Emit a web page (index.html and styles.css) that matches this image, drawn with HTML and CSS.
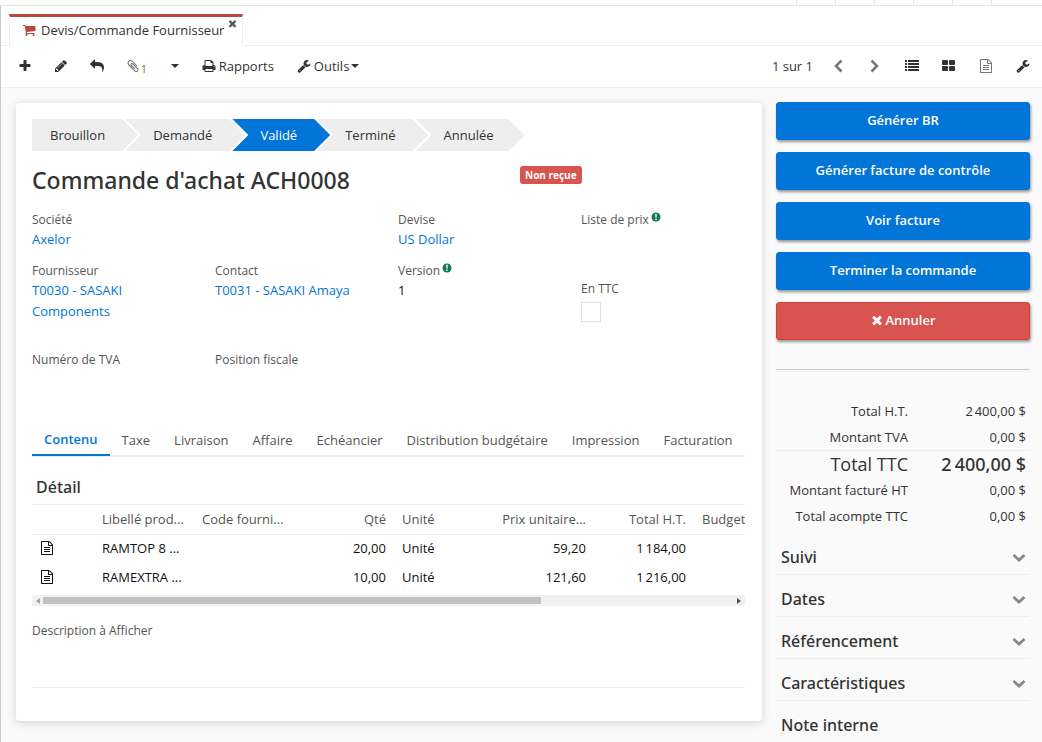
FILE: index.html
```html
<!DOCTYPE html>
<html lang="fr">
<head>
<meta charset="utf-8">
<title>Devis/Commande Fournisseur</title>
<link rel="stylesheet" href="styles.css">
</head>
<body>
<svg class="sprite" aria-hidden="true">
  <symbol id="plus" viewBox="0 0 1792 1792"><path d="M1600 736v192q0 40-28 68t-68 28h-416v416q0 40-28 68t-68 28h-192q-40 0-68-28t-28-68v-416h-416q-40 0-68-28t-28-68v-192q0-40 28-68t68-28h416v-416q0-40 28-68t68-28h192q40 0 68 28t28 68v416h416q40 0 68 28t28 68z"/></symbol>
  <symbol id="pencil" viewBox="0 0 1792 1792"><path d="M491 1536l91-91-235-235-91 91v107h128v128h107zm523-928q0-22-22-22-10 0-17 7l-542 542q-7 7-7 17 0 22 22 22 10 0 17-7l542-542q7-7 7-17zm-54-192l416 416-832 832h-416v-416zm683 96q0 53-37 90l-166 166-416-416 166-165q36-38 90-38 53 0 91 38l235 234q37 39 37 91z"/></symbol>
  <symbol id="reply" viewBox="0 0 1792 1792"><path d="M1792 640q0 26-19 45l-512 512q-19 19-45 19t-45-19-19-45v-256h-224q-98 0-175.500 6t-154 21.500-133 42.500-105.500 69.500-80 101-48.500 138.500-17.500 181q0 55 5 123 0 6 2.500 23.500t2.500 26.500q0 15-8.500 25t-23.500 10q-16 0-28-17-7-9-13-22t-13.500-30-10.500-24q-127-285-127-451 0-199 53-333 162-403 875-403h224v-256q0-26 19-45t45-19 45 19l512 512q19 19 19 45z" transform="matrix(-1 0 0 1 1792 0)"/></symbol>
  <symbol id="cart" viewBox="0 0 1792 1792"><path d="M704 1536q0 52-38 90t-90 38-90-38-38-90 38-90 90-38 90 38 38 90zm896 0q0 52-38 90t-90 38-90-38-38-90 38-90 90-38 90 38 38 90zm128-1088v512q0 24-16.500 42.500t-40.500 21.500l-1044 122q13 60 13 70 0 16-24 64h920q26 0 45 19t19 45-19 45-45 19h-1024q-26 0-45-19t-19-45q0-11 8-31.500t16-36 21.500-40 15.500-29.500l-177-823h-204q-26 0-45-19t-19-45 19-45 45-19h256q16 0 28.500 6.500t19.500 15.500 13 24.500 8 26 5.500 29.500 4.500 26h1201q26 0 45 19t19 45z"/></symbol>
  <symbol id="wrench" viewBox="0 0 1792 1792"><path d="M448 1472q0-26-19-45t-45-19-45 19-19 45 19 45 45 19 45-19 19-45zm644-420l-682 682q-37 37-90 37-52 0-91-37l-106-108q-38-36-38-90 0-53 38-91l681-681q39 98 114.500 173.500t173.500 114.500zm634-435q0 39-23 106-47 134-164.500 217.500t-258.500 83.500q-185 0-316.500-131.500t-131.500-316.500 131.500-316.500 316.500-131.500q58 0 121.500 16.500t107.500 46.500q16 11 16 28t-16 28l-293 169v224l193 107q5-3 79-48.500t135.500-81 70.500-35.500q15 0 23.500 10t8.500 25z"/></symbol>
  <symbol id="times" viewBox="0 0 1792 1792"><path d="M1490 1322q0 40-28 68l-136 136q-28 28-68 28t-68-28l-294-294-294 294q-28 28-68 28t-68-28l-136-136q-28-28-28-68t28-68l294-294-294-294q-28-28-28-68t28-68l136-136q28-28 68-28t68 28l294 294 294-294q28-28 68-28t68 28l136 136q28 28 28 68t-28 68l-294 294 294 294q28 28 28 68z"/></symbol>
  <symbol id="print" viewBox="0 0 1792 1792"><path d="M448 1536h896v-256h-896v256zm0-640h896v-384h-160q-40 0-68-28t-28-68v-160h-640v640zm1152 64q0-26-19-45t-45-19-45 19-19 45 19 45 45 19 45-19 19-45zm128 0v416q0 13-9.500 22.500t-22.500 9.500h-224v160q0 40-28 68t-68 28h-960q-40 0-68-28t-28-68v-160h-224q-13 0-22.500-9.500t-9.500-22.500v-416q0-79 56.500-135.500t135.500-56.500h64v-544q0-40 28-68t68-28h672q40 0 88 20t76 48l152 152q28 28 48 76t20 88v256h64q79 0 135.500 56.500t56.500 135.500z"/></symbol>
  <symbol id="clip" viewBox="0 0 1792 1792"><path d="M1596 1385q0 117-79 196t-196 79q-135 0-235-100l-777-776q-113-115-113-271 0-159 110-270t269-111q158 0 273 113l605 606q10 10 10 22 0 16-30.500 46.500t-46.500 30.500q-13 0-23-10l-606-607q-79-77-181-77-106 0-179 75t-73 181q0 105 76 181l776 777q63 63 145 63 64 0 106-42t42-106q0-82-63-145l-581-581q-26-24-60-24-29 0-48 19t-19 48q0 32 25 59l410 410q10 10 10 22 0 16-31 47t-47 31q-12 0-22-10l-410-410q-63-61-63-149 0-82 57-139t139-57q88 0 149 63l581 581q100 98 100 235z"/></symbol>
  <symbol id="file" viewBox="0 0 1792 1792"><path d="M1596 380q28 28 48 76t20 88v1152q0 40-28 68t-68 28h-1344q-40 0-68-28t-28-68v-1600q0-40 28-68t68-28h896q40 0 88 20t76 48zm-444-244v376h376q-10-29-22-41l-313-313q-12-12-41-22zm384 1528v-1024h-416q-40 0-68-28t-28-68v-416h-768v1536h1280zm-1024-896h768v128h-768zm0 256h768v128h-768zm0 256h768v128h-768z"/></symbol>
  <symbol id="list" viewBox="0 0 14 14"><path d="M0 1h2v2H0zM3 1h11v2H3zM0 4h2v2H0zM3 4h11v2H3zM0 7h2v2H0zM3 7h11v2H3zM0 10h2v2H0zM3 10h11v2H3z"/></symbol>
  <symbol id="cards" viewBox="0 0 14 14"><rect x="0" y="1" width="6" height="5" rx="1"/><rect x="7" y="1" width="6" height="5" rx="1"/><rect x="0" y="7" width="6" height="5" rx="1"/><rect x="7" y="7" width="6" height="5" rx="1"/></symbol>
  <symbol id="left" viewBox="0 0 14 14"><path d="M10.500 1.500L5 7l5.500 5.500" fill="none" stroke="currentColor" stroke-width="2.600"/></symbol>
  <symbol id="right" viewBox="0 0 14 14"><path d="M3.500 1.500L9 7l-5.500 5.500" fill="none" stroke="currentColor" stroke-width="2.600"/></symbol>
  <symbol id="down" viewBox="0 0 14 14"><path d="M1.500 5L7 10l5.500-5" fill="none" stroke="currentColor" stroke-width="2.800"/></symbol>
  <symbol id="caret" viewBox="0 0 8 4"><path d="M0 0h8L4 4z"/></symbol>
  <symbol id="info" viewBox="0 0 10 10"><circle cx="5" cy="5" r="4.500"/><path d="M4.200 1.800h1.600l-.3 3.900h-1zM4.300 6.600h1.400V8H4.300z" fill="#fff"/></symbol>
</svg>

<div class="topbar"><i></i><i></i><i></i><i></i><i></i><i></i></div>
<div class="app">
  <nav class="tabstrip">
    <div class="view-tab">
      <svg class="icon cart"><use href="#cart"/></svg>
      <a href="#">Devis/Commande Fournisseur</a>
      <button class="plain close" aria-label="Fermer"><svg class="icon"><use href="#times"/></svg></button>
    </div>
  </nav>

  <div class="toolbar">
    <div class="tools">
      <button class="plain" aria-label="Nouveau"><svg class="icon"><use href="#plus"/></svg></button>
      <button class="plain" aria-label="Modifier"><svg class="icon"><use href="#pencil"/></svg></button>
      <button class="plain" aria-label="Retour"><svg class="icon"><use href="#reply"/></svg></button>
      <button class="plain attach" aria-label="Pièces jointes"><svg class="icon"><use href="#clip"/></svg><sub>1</sub></button>
      <button class="plain" aria-label="Plus"><svg class="caret"><use href="#caret"/></svg></button>
      <button class="plain labelled"><svg class="icon"><use href="#print"/></svg>Rapports</button>
      <button class="plain labelled"><svg class="icon"><use href="#wrench"/></svg>Outils<svg class="caret"><use href="#caret"/></svg></button>
    </div>
    <div class="pager">
      <span class="count">1 sur 1</span>
      <button class="plain muted" aria-label="Précédent"><svg class="icon"><use href="#left"/></svg></button>
      <button class="plain muted" aria-label="Suivant"><svg class="icon"><use href="#right"/></svg></button>
      <button class="plain" aria-label="Liste"><svg class="icon"><use href="#list"/></svg></button>
      <button class="plain" aria-label="Cartes"><svg class="icon"><use href="#cards"/></svg></button>
      <button class="plain muted" aria-label="Formulaire"><svg class="icon"><use href="#file"/></svg></button>
      <button class="plain" aria-label="Options"><svg class="icon"><use href="#wrench"/></svg></button>
    </div>
  </div>

  <div class="content">
    <main class="card">
      <ol class="steps">
        <li>Brouillon</li><li>Demandé</li><li class="current">Validé</li><li>Terminé</li><li>Annulée</li>
      </ol>

      <div class="fields heading">
        <h1>Commande d'achat ACH0008</h1>
        <span class="badge">Non reçue</span>
      </div>
      <div class="fields row-company">
        <div class="field wide"><span class="label">Société</span><a href="#">Axelor</a></div>
        <div class="field"><span class="label">Devise</span><a href="#">US Dollar</a></div>
        <div class="field"><span class="label">Liste de prix<svg class="info"><use href="#info"/></svg></span></div>
      </div>
      <div class="fields row-supplier">
        <div class="field"><span class="label">Fournisseur</span><a href="#">T0030 - SASAKI Components</a></div>
        <div class="field"><span class="label">Contact</span><a href="#">T0031 - SASAKI Amaya</a></div>
        <div class="field"><span class="label">Version<svg class="info"><use href="#info"/></svg></span><span class="value">1</span></div>
        <div class="field tax"><label class="label" for="ttc">En TTC</label><input type="checkbox" id="ttc"></div>
      </div>
      <div class="fields row-tax">
        <div class="field"><span class="label">Numéro de TVA</span></div>
        <div class="field"><span class="label">Position fiscale</span></div>
      </div>

      <nav class="tabs">
        <a href="#" class="active">Contenu</a><a href="#">Taxe</a><a href="#">Livraison</a><a href="#">Affaire</a><a href="#">Echéancier</a><a href="#">Distribution budgétaire</a><a href="#">Impression</a><a href="#">Facturation</a>
      </nav>

      <h2>Détail</h2>
      <div class="grid">
        <table>
          <colgroup><col class="c-icon"><col><col><col><col><col><col><col></colgroup>
          <thead>
            <tr><th></th><th>Libellé prod...</th><th>Code fourni...</th><th class="num">Qté</th><th>Unité</th><th class="num">Prix unitaire...</th><th class="num">Total H.T.</th><th>Budget</th></tr>
          </thead>
          <tbody>
            <tr><td><svg class="icon"><use href="#file"/></svg></td><td>RAMTOP 8 ...</td><td></td><td class="num">20,00</td><td>Unité</td><td class="num">59,20</td><td class="num">1&#8239;184,00</td><td></td></tr>
            <tr><td><svg class="icon"><use href="#file"/></svg></td><td>RAMEXTRA ...</td><td></td><td class="num">10,00</td><td>Unité</td><td class="num">121,60</td><td class="num">1&#8239;216,00</td><td></td></tr>
          </tbody>
        </table>
      </div>
      <div class="scrollbar">
        <svg class="arrow off" viewBox="0 0 4 6"><path d="M4 0v6L0 3z"/></svg>
        <div class="track"><div class="thumb"></div></div>
        <svg class="arrow" viewBox="0 0 4 6"><path d="M0 0v6l4-3z"/></svg>
      </div>
      <div class="description"><span class="label">Description à Afficher</span></div>
    </main>

    <aside class="side">
      <div class="actions">
        <button class="btn">Générer BR</button>
        <button class="btn">Générer facture de contrôle</button>
        <button class="btn">Voir facture</button>
        <button class="btn">Terminer la commande</button>
        <button class="btn danger"><svg class="icon"><use href="#times"/></svg>Annuler</button>
      </div>
      <hr>
      <dl class="totals">
        <div><dt>Total H.T.</dt><dd>2&#8239;400,00 $</dd></div>
        <div><dt>Montant TVA</dt><dd>0,00 $</dd></div>
        <div class="grand"><dt>Total TTC</dt><dd>2&#8239;400,00 $</dd></div>
        <div><dt>Montant facturé HT</dt><dd>0,00 $</dd></div>
        <div><dt>Total acompte TTC</dt><dd>0,00 $</dd></div>
      </dl>
      <div class="panels">
        <button class="panel">Suivi<svg class="icon"><use href="#down"/></svg></button>
        <button class="panel">Dates<svg class="icon"><use href="#down"/></svg></button>
        <button class="panel">Référencement<svg class="icon"><use href="#down"/></svg></button>
        <button class="panel">Caractéristiques<svg class="icon"><use href="#down"/></svg></button>
        <h3 class="panel">Note interne</h3>
      </div>
    </aside>
  </div>
</div>
</body>
</html>
```
FILE: styles.css
```css
* { box-sizing: border-box; }
body {
  margin: 0;
  min-height: 100vh;
  display: flex;
  flex-direction: column;
  font: 13px/20px "Open Sans", "Noto Sans", sans-serif;
  color: #333;
  background: #fff;
}
a { color: #0275d8; text-decoration: none; }
button { font: inherit; color: inherit; cursor: pointer; }
h1, h2, h3, ol, dl, dd { margin: 0; padding: 0; font-weight: 500; }
h1, h2, .panel, .totals .grand dd { font-family: "Noto Sans", "Open Sans", sans-serif; }
.sprite { position: absolute; width: 0; height: 0; }
.icon { width: 14px; height: 14px; fill: currentColor; flex: none; }
.caret { width: 8px; height: 4px; fill: currentColor; }

.topbar {
  height: 6px;
  display: flex;
  justify-content: flex-end;
  padding-right: 50px;
  border-bottom: 1px solid #e7e7e7;
}
.topbar i { width: 39px; border-left: 1px solid #e7e7e7; }
.topbar i:last-child { width: 1px; }
.app { flex: 1; display: flex; flex-direction: column; border-left: 1px solid #ccc; }

.tabstrip { display: flex; height: 40px; padding: 8px 8px 0; border-bottom: 1px solid #eee; }
.view-tab {
  display: flex;
  align-items: center;
  height: 32px;
  padding: 0 4px 3px 12px;
  border: 1px solid #eee;
  border-top: 3px solid #b8473d;
  border-bottom: 0;
  margin-bottom: -1px;
  background: #fff;
}
.view-tab a { color: #333; margin: 0 3px 0 5px; }
.view-tab .cart { color: #b8473d; }
.close { align-self: flex-start; color: #555; }
.close .icon { width: 11px; height: 11px; margin-top: 1px; }

.plain { display: flex; align-items: center; padding: 0; border: 0; background: none; }
.muted { color: #777; }
.toolbar {
  display: flex;
  justify-content: space-between;
  align-items: center;
  height: 42px;
  padding: 0 12px 2px 17px;
  border-bottom: 1px solid #eee;
}
.tools, .pager { display: flex; align-items: center; }
.tools { gap: 23px; }
.pager { gap: 23px; }
.pager .count { margin-right: -5px; }
.tools .plain + .plain:not(.labelled) { margin-left: -1px; }
.attach { color: #666; }
.attach sub { margin: 6px 2px 0 1px; font-size: 10px; line-height: 10px; }
.labelled .icon { margin-right: 3px; }
.labelled .caret { margin-left: 2px; }

.content {
  flex: 1;
  display: grid;
  grid-template-columns: minmax(0, 1fr) 254px;
  gap: 14px;
  align-items: start;
  padding: 14px 12px 0 15px;
  background: #fafafa;
}
.card {
  margin-top: 1px;
  padding: 16px 16px 32px;
  border: 1px solid #fff;
  border-width: 0 1px 1px 0;
  border-radius: 4px;
  background: #fff;
  box-shadow: 0 2px 10px rgba(0, 0, 0, .16);
}

.steps { display: flex; list-style: none; font-weight: 400; }
.steps li {
  height: 32px;
  margin-left: -13px;
  padding: 0 33px 0 28px;
  line-height: 32px;
  background: #eee;
  clip-path: polygon(0 0, calc(100% - 16px) 0, 100% 50%, calc(100% - 16px) 100%, 0 100%, 16px 50%);
}
.steps li:first-child {
  margin-left: 0;
  padding-left: 18px;
  clip-path: polygon(0 0, calc(100% - 16px) 0, 100% 50%, calc(100% - 16px) 100%, 0 100%);
}
.steps li:last-child { padding-right: 31px; }
.steps .current { background: #0275d8; color: #fff; }

.fields { display: grid; grid-template-columns: repeat(12, minmax(0, 1fr)); column-gap: 19px; }
.heading { padding-top: 15px; height: 59px; align-items: start; }
h1 { grid-column: span 8; font-size: 23px; line-height: 28px; }
.badge {
  grid-column: span 4;
  justify-self: start;
  padding: 0 5px;
  border-radius: 3px;
  background: #d9534f;
  color: #fff;
  font-size: 10px;
  font-weight: 700;
  line-height: 18px;
}
.field { grid-column: span 3; display: flex; flex-direction: column; line-height: 21px; }
.field.wide { grid-column: span 6; }
.label { font-size: 12px; line-height: 19px; color: #555; }
.info { width: 10px; height: 10px; margin-left: 2px; fill: #107c4f; vertical-align: 2px; }
.row-company, .row-supplier { min-height: 51px; }
.row-supplier { margin-bottom: 28px; }
.row-tax { margin-bottom: 56px; }
.value { color: #111; }
.tax { align-self: end; }
.tax input {
  appearance: none;
  width: 20px;
  height: 20px;
  margin: 4px 0 0;
  border: 1px solid #ddd;
  background: #fff;
}

.tabs { display: flex; border-bottom: 2px solid #eee; }
.tabs a { padding: 5px 12px 6px; margin-bottom: -1px; color: #555; }
.tabs .active {
  padding: 4px 12px 5px;
  border-bottom: 2px solid #0275d8;
  color: #0275d8;
  font-weight: 600;
}
h2 { padding: 20px 4px 7px; font-size: 16px; }

.grid { overflow: hidden; border-top: 1px solid #eee; }
table { width: 762px; table-layout: fixed; border-collapse: collapse; }
col { width: 100px; }
.c-icon { width: 62px; }
th, td { height: 29px; padding: 0 8px; text-align: left; white-space: nowrap; }
th { border-bottom: 1px solid #eee; color: #555; font-weight: 400; }
td { padding-bottom: 2px; color: #111; }
.num { text-align: right; }
td .icon { display: block; }

.scrollbar { display: flex; align-items: center; height: 11px; margin-top: 3px; padding: 0 4px; gap: 3px; background: #f1f1f1; }
.track { flex: 1; }
.thumb { width: 72%; height: 7px; background: #c1c1c1; }
.arrow { width: 4px; height: 6px; fill: #505050; }
.arrow.off { fill: #a3a3a3; }
.description { height: 82px; padding-top: 14px; border-bottom: 1px solid #eee; }

.actions { display: flex; flex-direction: column; gap: 12px; }
.btn {
  display: flex;
  align-items: center;
  justify-content: center;
  gap: 1px;
  height: 38px;
  padding: 0 12px 2px;
  border: 1px solid #0275d8;
  border-radius: 3px;
  background: #0275d8;
  color: #fff;
  font-weight: 600;
  box-shadow: 1px 2px 3px rgba(0, 0, 0, .4);
}
.danger { background: #d9534f; border-color: #d43f3a; }
hr { height: 1px; margin: 29px 0 28px; border: 0; background: #ccc; }
.totals div {
  display: grid;
  grid-template-columns: 132px 1fr;
  line-height: 26px;
  padding-right: 4px;
  text-align: right;
}
.totals dd { font-weight: 400; }
.totals .grand { border-top: 1px solid #eee; font-size: 18px; }
.totals .grand dd { font-weight: 500; }
.panels { display: flex; flex-direction: column; padding-top: 4px; }
.panel {
  display: flex;
  align-items: center;
  justify-content: space-between;
  height: 42px;
  padding: 6px 4px 0 5px;
  border: 0;
  border-bottom: 1px solid #eee;
  background: none;
  font-size: 16px;
  font-weight: 500;
}
.panel .icon { color: #888; }
h3.panel { border-bottom: 0; }
```
